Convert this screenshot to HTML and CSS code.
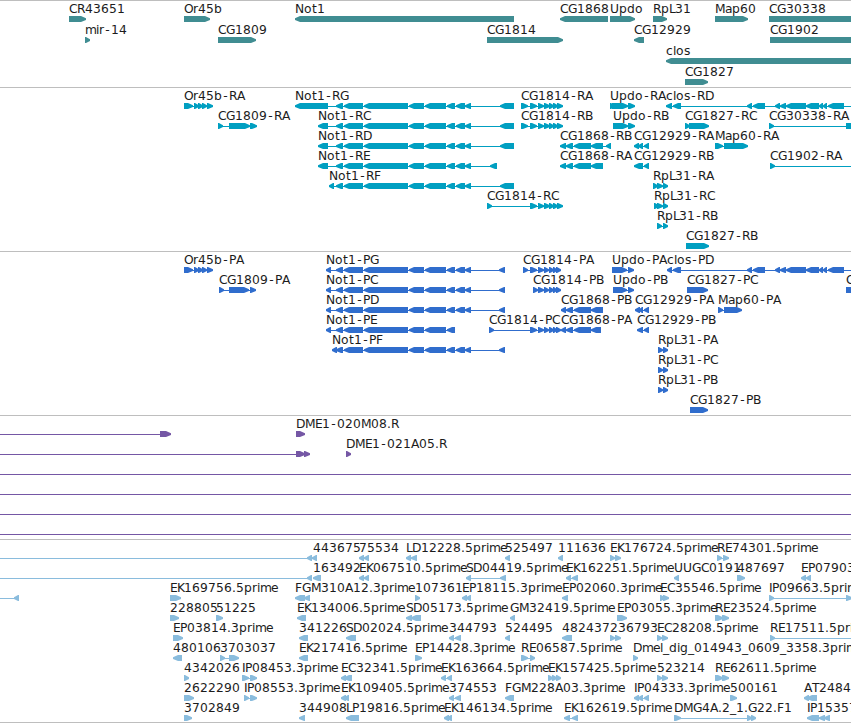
FILE: index.html
```
<!DOCTYPE html>
<html lang="en">
<head>
<meta charset="utf-8">
<title>Genome browser</title>
<link rel="stylesheet" href="styles.css">
</head>
<body>
<main class="browser" id="browser"></main>
<script src="tracks.js"></script>
</body>
</html>
```
FILE: styles.css
```
body {
  margin: 0;
  background: #fff;
}
.browser {
  display: flex;
  flex-direction: column;
  width: 851px;
  height: 723px;
  overflow: hidden;
}
.track {
  flex: none;
  box-sizing: border-box;
  border-top: 1px solid #bebebe;
  overflow: hidden;
}
.track:last-child {
  border-bottom: 1px solid #bebebe;
}
.track svg {
  display: block;
}
.genes { height: 87px; color: #408d92; }
.transcripts { height: 164px; color: #009fc1; }
.proteins { height: 164px; color: #306dcd; }
.clones { height: 124px; color: #7557a5; }
.ests { height: 184px; color: #8abcdd; }
.glyph {
  fill: currentColor;
}
.label {
  fill: #1c1c1c;
  font: 12.3px "DejaVu Sans", sans-serif;
}
```
FILE: tracks.js
```
// Feature: "label; label x; row; strand; exon start-end, ...; intron line start-end"
const NOT1 = "336-343,344-363,364-408,409-424,425-446,447-455,456-465,465-471";
const CLOS = "747-752,753-765,775-780,780-786,786-806,806-819,819-823,823-827,828-844,900-905";
const tracks = [
  { name: "genes", rowHeight: 21, height: 86, features: `
CR43651;69;0;>;69-86
mir-14;85;1;>;85-90
Or45b;184;0;>;184-210
CG1809;218;1;>;218-256
Not1;295;0;<;295-514
CG1814;487;1;>;487-563
CG1868;560;0;<;560-608
Updo;610;0;>;610-635
RpL31;653;0;>;653-667
CG12929;634;1;<;634-644
Map60;715;0;>;715-748
CG30338;769;0;>;769-900
CG1902;770;1;>;770-900
clos;666;2;<;666-900
CG1827;685;3;>;685-708` },
  { name: "transcripts", rowHeight: 20, height: 163, features: `
Or45b-RA;184;0;>;184-193,194-199,198-203,202-207,207-213
CG1809-RA;218;1;>;218-223,229-250,250-257
Not1-RG;295;0;<;295-328,${NOT1},500-514
Not1-RC;318;1;<;318-328,${NOT1},500-514
Not1-RD;318;2;<;318-328,${NOT1},500-514
Not1-RE;318;3;<;318-328,${NOT1},490-497
Not1-RF;329;4;<;329-334,${NOT1},500-514
CG1814-RA;521;0;>;521-528,530-537,538-544,544-550,549-554,553-558,557-563
CG1814-RB;521;1;>;521-528,530-537,538-544,544-550,549-554,553-558,557-563
CG1814-RC;487;5;>;487-492,530-537,538-544,544-550,549-554,553-558,557-563
CG1868-RB;560;2;<;560-566,566-573,574-591,591-603,606-611
CG1868-RA;560;3;<;560-566,566-573,574-591,591-603
Updo-RA;610;0;>;610-615,612-628,628-635
Updo-RB;613;1;>;613-628,628-635
clos-RD;666;0;<;666-672,673-681,${CLOS}
CG1827-RC;685;1;>;685-690,689-709
CG30338-RA;769;1;>;769-774,846-900
CG12929-RA;634;2;<;634-639,638-643,644-649
CG12929-RB;634;3;<;634-643,644-649
Map60-RA;715;2;>;715-723,724-748
CG1902-RA;770;3;>;770-775,900-905
RpL31-RA;653;4;>;653-658,657-663,663-668
RpL31-RC;654;5;>;654-659,657-663,663-668
RpL31-RB;657;6;>;657-662,663-668
CG1827-RB;686;7;>;686-709` },
  { name: "proteins", rowHeight: 20, height: 163, features: `
Or45b-PA;184;0;>;184-193,194-199,198-203,202-207,207-213
CG1809-PA;219;1;>;219-224,229-249,250-256
Not1-PG;326;0;<;326-331,${NOT1},499-505
Not1-PC;326;1;<;326-331,${NOT1},499-505
Not1-PD;326;2;<;326-331,${NOT1},499-505
Not1-PE;326;3;<;326-331,336-343,344-363,364-408,409-424,425-446,447-455
Not1-PF;332;4;<;332-337,${NOT1},499-505
CG1814-PA;523;0;>;523-528,530-537,538-544,544-549,549-554,553-557,556-561
CG1814-PB;533;1;>;533-538,538-544,544-549,549-554,553-557,556-561
CG1814-PC;489;3;>;489-494,530-537,538-544,544-549,549-554,553-557,556-561
CG1868-PB;561;2;<;561-566,566-573,574-591,591-603
CG1868-PA;561;3;<;561-566,566-573,574-591,591-601
Updo-PA;612;0;>;612-627,628-634
Updo-PB;613;1;>;613-627,628-634
clos-PD;667;0;<;667-672,673-681,${CLOS}
CG1827-PC;687;1;>;687-708
CG30338-PA;846;1;>;846-900
CG12929-PA;635;2;<;635-640,639-643,644-649
CG12929-PB;637;3;<;637-643,644-649
Map60-PA;718;2;>;718-723,724-742
RpL31-PA;658;4;>;658-663,663-668
RpL31-PC;658;5;>;658-663,663-668
RpL31-PB;658;6;>;658-663,663-668
CG1827-PB;690;7;>;690-708` },
  { name: "clones", rowHeight: 20, height: 123, features: `
;0;0;>;160-171;0-160
DME1-020M08.R;296;0;>;296-305
;0;1;>;296-305,304-310;0-296
DME1-021A05.R;346;1;>;346-351
;0;2;>;;0-851
;0;3;>;;0-851
;0;4;>;;0-851
;0;5;>;;0-851` },
  { name: "ests", rowHeight: 20, height: 182, features: `
443675;313;0;<;307-312,312-317;0-307
75534;359;0;<;359-364,364-369
LD12228.5prime;406;0;<;406-411,411-417
525497;505;0;<;505-510
111636;558;0;<;558-563
EK176724.5prime;610;0;>;610-615,615-621
RE74301.5prime;717;0;>;717-722,723-729
;0;1;<;307-312;0-307
163492;313;1;<;313-321
EK067510.5prime;359;1;<;359-364,364-369
SD04419.5prime;466;1;<;466-471,500-506
EK162251.5prime;566;1;<;566-571,572-578
UUGC0191;674;1;<;674-679
487697;737;1;>;737-745
EP07903.5prime;801;1;<;801-806,806-811
;0;2;<;14-19;0-14
EK169756.5prime;170;2;>;170-181
FGM310A12.3prime;295;2;<;295-305,304-310
107361;415;2;>;415-420
EP18115.3prime;462;2;<;462-467,466-471
EP02060.3prime;562;2;<;562-568
EC35546.5prime;660;2;>;660-665,663-669
IP09663.5prime;769;2;>;769-774,846-852
228805;170;3;>;170-179
51225;216;3;>;216-223
EK134006.5prime;297;3;<;297-306
SD05173.5prime;406;3;<;406-412,411-421
GM32419.5prime;510;3;<;510-515
EP03055.3prime;617;3;>;617-627
RE23524.5prime;715;3;>;715-723,722-729
EP03814.3prime;173;4;>;173-183
341226;299;4;<;299-308
SD02024.5prime;346;4;<;346-356
344793;449;4;<;449-454,455-461
524495;505;4;<;505-510
482437;562;4;<;562-572
236793;610;4;>;610-615,615-621
EC28208.5prime;657;4;>;657-662,662-668
RE17511.5prime;770;4;>;770-775,900-905
480106;173;5;<;173-182
3703037;220;5;>;220-225,229-239
EK217416.5prime;299;5;<;299-308
EP14428.3prime;415;5;>;415-422
RE06587.5prime;521;5;>;521-528,530-535
Dmel_dig_014943_0609_3358.3prime;633;5;>;633-638
4342026;184;6;>;184-189
IP08453.3prime;242;6;>;242-249,250-257
EC32341.5prime;341;6;<;341-346,344-352
EK163664.5prime;441;6;<;441-446,447-452
EK157425.5prime;548;6;>;548-553,552-557,556-561
523214;657;6;>;657-662,662-668
RE62611.5prime;715;6;>;715-723,722-729
2622290;184;7;>;184-194
IP08553.3prime;244;7;>;244-249,250-257
EK109405.5prime;341;7;<;341-346,344-349
374553;449;7;<;449-454,455-461
FGM228A03.3prime;505;7;<;505-514
IP04333.3prime;634;7;<;634-639,638-643,644-649
500161;730;7;>;730-737
AT2484;804;7;<;804-809,807-817
3702849;184;8;>;184-192
344908;299;8;<;299-305
LP19816.5prime;346;8;<;346-359
EK146134.5prime;444;8;<;444-449,447-452
EK162619.5prime;564;8;<;564-570,572-578
DMG4A.2_1.G22.F1;674;8;>;674-681,747-752,751-756
IP15357;807;8;<;807-819,819-825,824-830` }
];

// Whole-pixel advance widths for the label font
const advance = { N: 9, D: 9, U: 9, G: 9, O: 9, M: 10, E: 7, K: 7, P: 7, S: 7, F: 7, T: 7, L: 6, I: 3,
  m: 11, i: 3, l: 3, r: 5, t: 5, e: 7, a: 7, c: 7, s: 6, "-": 7, _: 6, ".": 4 };
const inset = { "-": 1.3 };

function glyphPositions(label, x) {
  return [...label].map(ch => {
    const at = x + (inset[ch] || 0);
    x += advance[ch] || 8;
    return at;
  }).join(" ");
}

function exonPath(a, b, strand, y) {
  const tip = strand === ">" ? b : a;
  const back = strand === ">" ? a : b;
  const d = strand === ">" ? -1 : 1;
  const neck = tip + d * Math.min(5, b - a - 1);
  return `M${back} ${y}H${neck}L${tip} ${y + 2.2}V${y + 4}L${neck} ${y + 6}H${back}Z`;
}

for (const track of tracks) {
  let glyphs = "", labels = "";
  for (const line of track.features.trim().split("\n")) {
    const [label, x, row, strand, exonList, intron] = line.split(";");
    const y = 15 + row * track.rowHeight;
    const exons = exonList ? exonList.split(",").map(e => e.split("-").map(Number)) : [];
    const spans = [];
    if (exons.length > 1) spans.push([exons[0][0] + 2, exons[exons.length - 1][1] - 2]);
    if (intron) spans.push(intron.split("-").map(Number));
    for (const [a, b] of spans) glyphs += `<rect x="${a}" y="${y + 3}" width="${b - a}" height="1"/>`;
    for (const [a, b] of exons) glyphs += `<path d="${exonPath(a, b, strand, y)}"/>`;
    if (label) labels += `<text class="label" y="${y - 3}" x="${glyphPositions(label, +x)}">${label}</text>`;
  }
  const section = document.createElement("section");
  section.className = "track " + track.name;
  section.innerHTML = `<svg width="851" height="${track.height}"><g class="glyph">${glyphs}</g>${labels}</svg>`;
  document.getElementById("browser").append(section);
}
```
